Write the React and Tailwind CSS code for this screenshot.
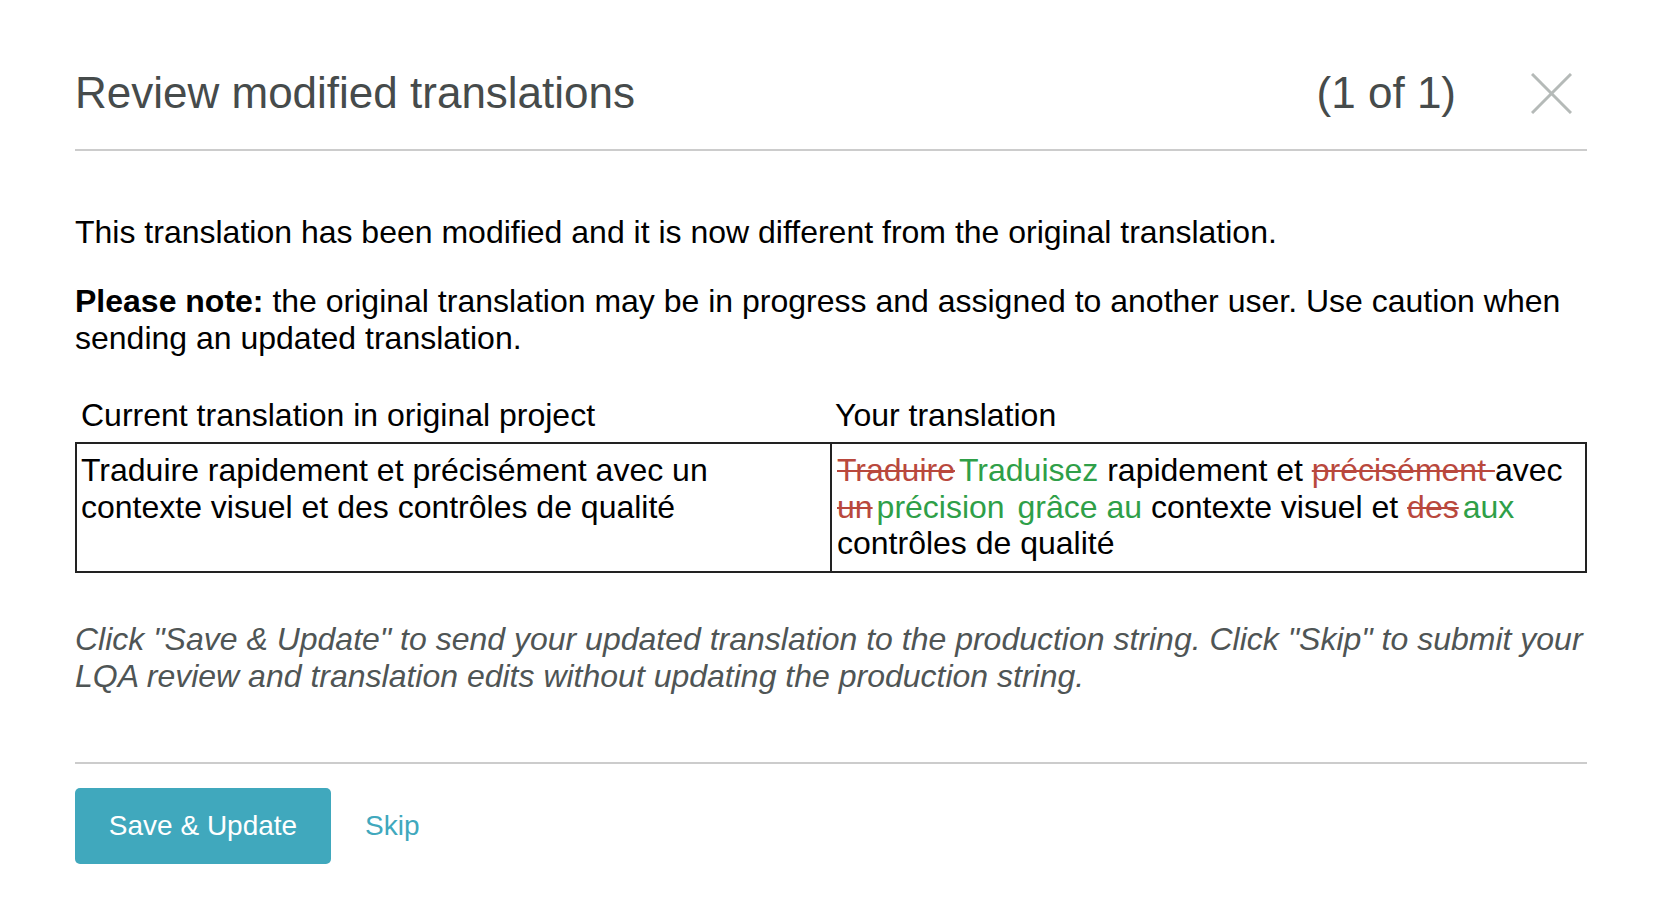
export default function App() {
	const del = "line-through text-[#b9483d] decoration-[2px] mr-[4px]";
	const ins = "text-[#2f9f48]";

	return (
		<div className="min-h-screen bg-white pl-[75px] pr-[77px] font-['Liberation_Sans',Arial,sans-serif] text-black">
			{/* header */}
			<div className="flex items-center pt-[68px] pb-[30px] border-b-2 border-[#cccccc]">
				<h1 className="flex-1 text-[44px] leading-[1.15] text-[#464b4b]">
					Review modified translations
				</h1>
				<span className="text-[44px] leading-[1.15] text-[#464b4b]">(1 of 1)</span>
				<button className="ml-[75px] mr-[15px] w-[41px] h-[41px] flex items-center justify-center">
					<svg width="41" height="41" viewBox="0 0 41 41" fill="none" stroke="#b5bab8" strokeWidth="3">
						<line x1="1" y1="1" x2="40" y2="40" />
						<line x1="40" y1="1" x2="1" y2="40" />
					</svg>
				</button>
			</div>

			{/* body */}
			<div className="text-[32px] leading-[1.15]">
				<p className="mt-[63px]">
					This translation has been modified and it is now different from the original translation.
				</p>
				<p className="mt-[33px]">
					<b>Please note:</b> the original translation may be in progress and assigned to another user. Use caution when sending an updated translation.
				</p>

				<table className="mt-[40px] w-full table-fixed border-collapse">
					<thead>
						<tr>
							<th className="w-1/2 text-left font-normal px-[5px] pb-[8px]">Current translation in original project</th>
							<th className="w-1/2 text-left font-normal px-[4px] pb-[8px]">Your translation</th>
						</tr>
					</thead>
					<tbody>
						<tr>
							<td className="align-top border-2 border-[#222] px-[4px] pt-[8px] pb-[9px]">
								Traduire rapidement et précisément avec un contexte visuel et des contrôles de qualité
							</td>
							<td className="align-top border-2 border-[#222] px-[5px] pt-[8px] pb-[9px]">
								<span className={del}>Traduire</span>
								<span className={ins}>Traduisez</span> rapidement et{" "}
								<span className="line-through text-[#b9483d] decoration-[2px]">précisément </span>avec{" "}
								<span className={del}>un</span>
								<span className={ins}>précision</span>{" "}
								<span className={ins + " ml-[4px]"}>grâce au</span> contexte visuel et{" "}
								<span className={del}>des</span>
								<span className={ins}>aux</span> contrôles de qualité
							</td>
						</tr>
					</tbody>
				</table>

				<p className="mt-[48px] italic text-[#4f5555]">
					Click "Save &amp; Update" to send your updated translation to the production string. Click "Skip" to submit your LQA review and translation edits without updating the production string.
				</p>
			</div>

			{/* footer */}
			<div className="mt-[67px] border-t-2 border-[#cccccc] pt-[24px] flex items-center">
				<button className="h-[76px] w-[256px] rounded-[5px] bg-[#40a8bd] text-white text-[28px]">
					Save &amp; Update
				</button>
				<button className="ml-[34px] text-[28px] text-[#40a8bd]">Skip</button>
			</div>
		</div>
	);
}
